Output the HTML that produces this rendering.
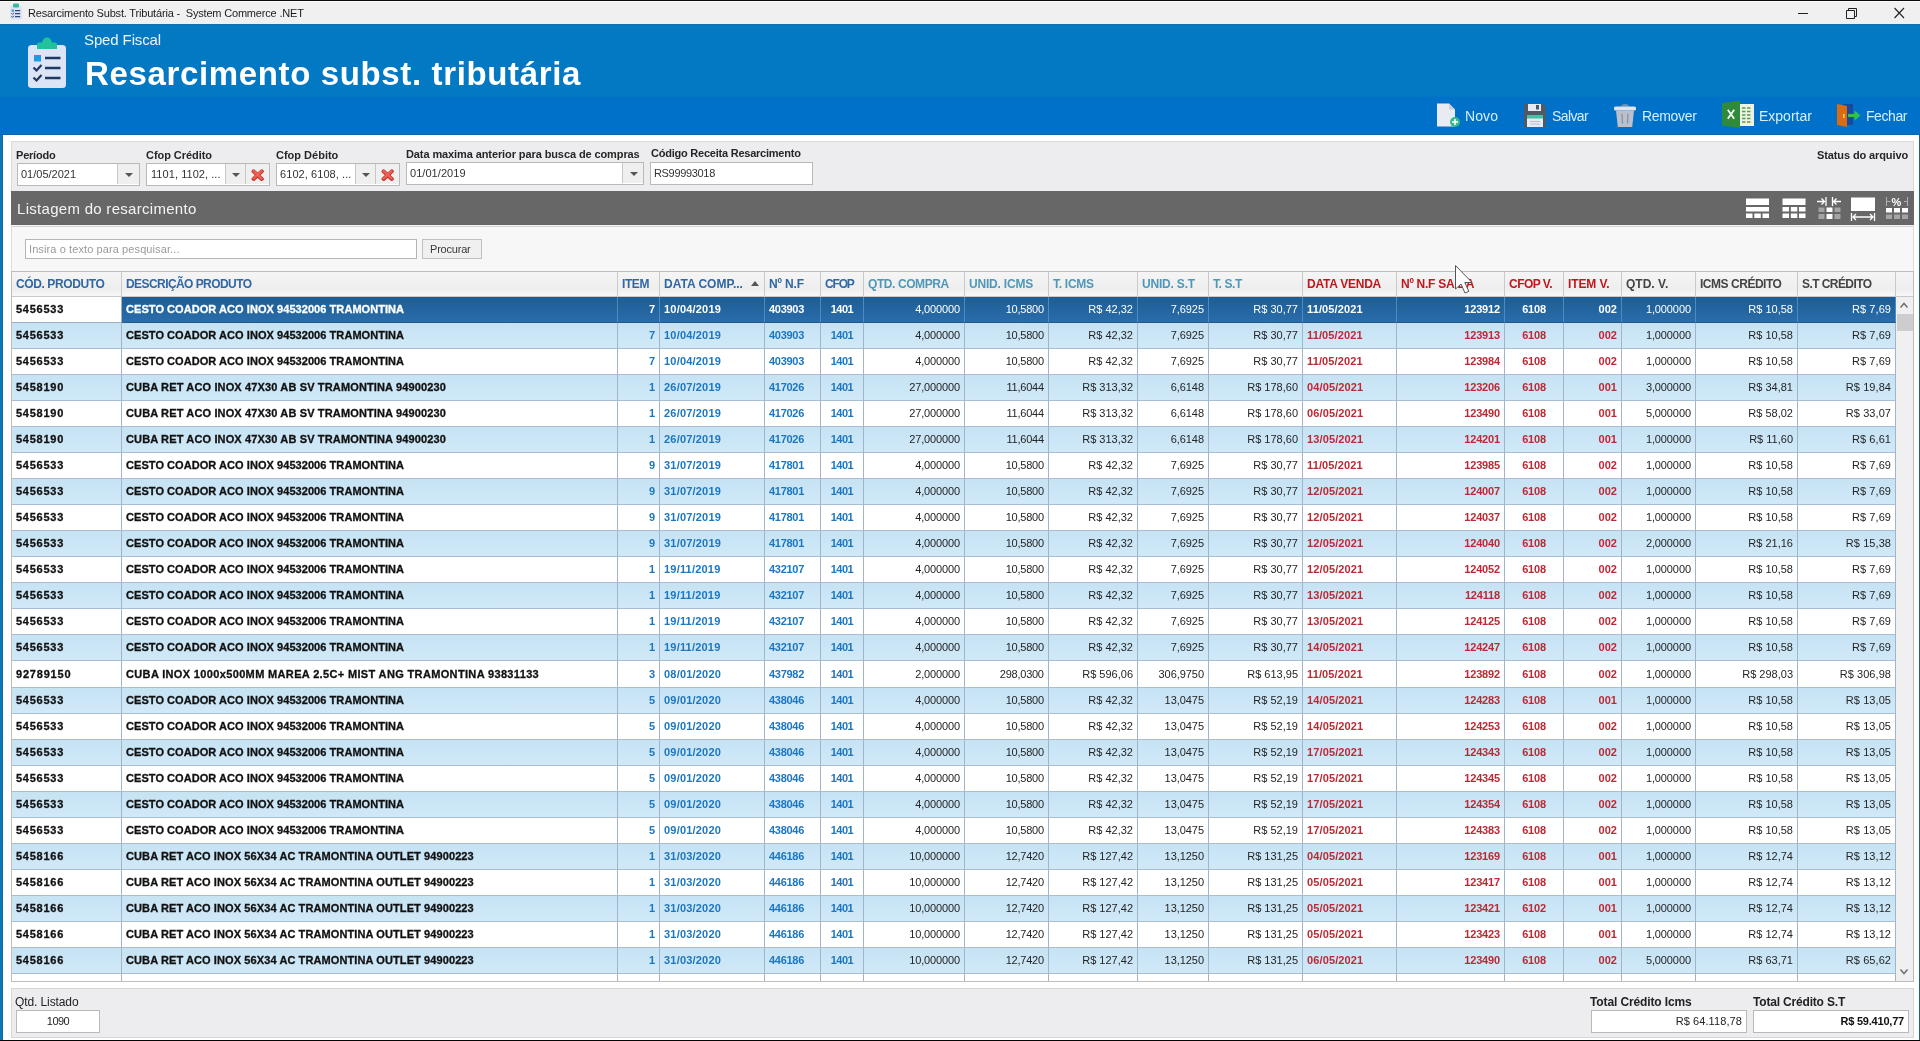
<!DOCTYPE html>
<html lang="pt-BR"><head><meta charset="utf-8"><title>Resarcimento Subst. Tributária - System Commerce .NET</title>
<style>
*{box-sizing:border-box;margin:0;padding:0}
html,body{width:1920px;height:1041px;overflow:hidden;background:#fff}
body{position:relative;-webkit-font-smoothing:antialiased;font-family:"Liberation Sans",sans-serif;font-size:11px;color:#1a1a1a}
.abs{position:absolute}
span{white-space:nowrap;display:inline-block}
#titletxt span{white-space:pre}
/* ---------- window chrome ---------- */
#topline{left:0;top:0;width:1920px;height:1px;background:#0b0b0b}
#titlebar{left:0;top:1px;width:1920px;height:23px;background:#f0f0f0;border-top:1px solid #fbfbfb;border-bottom:1px solid #e6f4fa}
#titletxt{left:28px;top:6px;white-space:pre;font-size:11px;line-height:14px;color:#1c1c1c}
#hdr1{left:0;top:24px;width:1920px;height:73px;background:linear-gradient(#0279c2 0,#0279c2 70px,#0175c5 73px);border-top:1px solid #1470a8}
#hdr2{left:0;top:97px;width:1920px;height:38px;background:#0071c8;border-bottom:1px solid #0a64b0}
#bleft{left:0;top:135px;width:3px;height:905px;background:linear-gradient(to right,#0b77b6 0,#0b77b6 2px,#1d6a96 2px)}
#bright{left:1919px;top:135px;width:1px;height:905px;background:#1f628c}
#bbot{left:0;top:1040px;width:1920px;height:1px;background:#050505}
#sped{left:84px;top:31px;font-size:15px;line-height:18px;color:#e9f4fc}
#bigtitle{left:85px;top:54px;font-size:33px;line-height:40px;font-weight:bold;color:#fff}
.tb{top:104px;height:24px;font-size:14px;line-height:24px;color:#d6eeff}
/* ---------- filter panel ---------- */
#fpanel{left:11px;top:141px;width:1903px;height:50px;background:#ededf0;border:1px solid #d9d9dc;border-bottom:none}
.lbl{font-size:11px;line-height:13px;font-weight:bold;color:#262626}
.inp{background:#fff;border:1px solid #b9b9b9;height:22px}
.inp .t{position:absolute;top:0;line-height:20px;font-size:11px;color:#333}
.h23{height:23px}.h23 .t{line-height:21px}.h23 .btn{height:21px}
.inp .btn{position:absolute;top:0;height:20px;background:#efefef;border-left:1px solid #c6c6c6}
.arr{position:absolute;width:0;height:0;border-left:4px solid transparent;border-right:4px solid transparent;border-top:4px solid #555}
/* ---------- dark caption ---------- */
#cap{left:11px;top:191px;width:1903px;height:34px;background:#676767}
#captxt{left:17px;top:200px;font-size:15px;line-height:18px;color:#f4f4f4}
/* ---------- search panel ---------- */
#spanel{left:11px;top:225px;width:1903px;height:47px;background:#f7f7f7;border:1px solid #dcdcdc;border-top:1px solid #f2f2f2;border-bottom:none;box-shadow:inset 0 1px 0 #d6d6d6}
#sinp{left:25px;top:239px;width:392px;height:20px;background:#fff;border:1px solid #b5b5b5}
#sinp span{position:absolute;left:3px;top:0;line-height:18px;color:#9a9a9a;font-size:11px}
#sbtn{left:422px;top:239px;width:60px;height:20px;background:#f0f0f0;border:1px solid #c0c0c0;text-align:left;padding-left:7px;line-height:18px;font-size:11px;color:#3a3a3a}
/* ---------- grid ---------- */
#grid{position:absolute;left:11px;top:271px;width:1903px;height:711px;border:1px solid #bdbdbd;background:#fff;overflow:hidden}
.hrow{position:absolute;left:0;top:0;width:1901px;height:25px;background:#f3f3f3}
.hc{position:absolute;top:0;height:25px;border-right:1px solid #c9c9c9;border-bottom:1px solid #c9c9c9;background:linear-gradient(#f5f5f5 0,#eeeeee 70%,#f7f7f7 100%);padding-left:4px;line-height:24px;font-size:12px;font-weight:bold;overflow:hidden}
.hb{color:#2f66a3}.ht{color:#4f97b9}.hr{color:#c2161c}.hk{color:#444}
.sort{position:absolute;right:5px;top:9px;width:0;height:0;border-left:4px solid transparent;border-right:4px solid transparent;border-bottom:5px solid #555}
.row{position:absolute;left:0;width:1884px;height:26px}
.c{position:absolute;top:0;height:26px;border-right:1px solid #a2b4ca;border-bottom:1px solid #a9bcd2;line-height:25px;font-size:11px;overflow:hidden;padding:0 4px}
.l{text-align:left}.r{text-align:right}.m{text-align:center}
.odd .c{background:linear-gradient(#c6e3f3,#d0e9f9)}
.even .c{background:#fff}
.sel .c{background:linear-gradient(#1d5d94,#2a6dab);border-right-color:#4b8bc4;border-bottom-color:#22588c;color:#fff}
.sel .c.foc{background:#fff;color:#111;border-right-color:#9fb0c6;border-bottom-color:#9fb0c6}
.kb{font-weight:bold;color:#111;-webkit-text-stroke:0.3px #111}
.bb{font-weight:bold;color:#1c76c0}
.rb{font-weight:bold;color:#bb2a34}
.nr{color:#242424}
.tall,.tall .c{height:27px}.tall .c{line-height:26px}
.sel .bb,.sel .rb,.sel .nr,.sel .kb{color:#fff}
.sel .kb{-webkit-text-stroke-color:#fff}
.sel .foc.kb{color:#111;-webkit-text-stroke-color:#111}
/* ---------- bottom panel ---------- */
#bpanel{left:11px;top:988px;width:1903px;height:50px;background:#ededf0;border:1px solid #d6d6d9}

#root{position:absolute;left:0;top:0;width:1920px;height:1041px;overflow:hidden;will-change:transform;transform:translateZ(0)}

.k0 span{letter-spacing:0.74px}.k1 span{letter-spacing:0.06px}.k2 span{letter-spacing:-0.12px;margin-right:0.12px}.k3 span{letter-spacing:0.20px}.k4 span{letter-spacing:-0.29px}.k5 span{letter-spacing:-0.50px}.k6 span{letter-spacing:-0.15px;margin-right:0.15px}.k7 span{letter-spacing:-0.25px;margin-right:0.25px}.k9 span{letter-spacing:-0.06px;margin-right:0.06px}.k11 span{letter-spacing:0.13px}.k12 span{letter-spacing:-0.20px;margin-right:0.20px}.k13 span{letter-spacing:-0.22px}.k14 span{letter-spacing:0.09px;margin-right:-0.09px}.k15 span{letter-spacing:-0.11px;margin-right:0.11px}.k17 span{letter-spacing:0.07px;margin-right:-0.07px}
</style></head><body><div id="root">
<div class="abs" id="titlebar"></div>
<div class="abs" id="topline"></div>
<svg class="abs" style="left:9px;top:3px" width="14" height="17" viewBox="0 0 14 17"><rect x="1" y="3" width="12" height="13.5" rx="1.5" fill="#dfe4f4"/><rect x="4" y="0.5" width="6" height="4" rx="1.2" fill="#2fbf9f"/><rect x="2.6" y="6.5" width="2.4" height="2.2" fill="#2f9fe0"/><path d="M6 7.6h5.2M6 10.6h5.2M6 13.6h5.2" stroke="#2d4a78" stroke-width="1.2"/><path d="M2.4 10.4l1 1 1.6-1.7M2.4 13.4l1 1 1.6-1.7" stroke="#2d4a78" stroke-width="1" fill="none"/></svg>
<div class="abs" id="titletxt"><span style="letter-spacing:-0.18px;">Resarcimento Subst. Tributária -  System Commerce .NET</span></div>
<svg class="abs" style="left:1790px;top:1px" width="130" height="23" viewBox="0 0 130 23"><path d="M8 12.5h10" stroke="#222" stroke-width="1"/><path d="M56.5 9.5h8v8h-8z M58.5 9.5v-2h8v8h-2" stroke="#222" stroke-width="1" fill="none"/><path d="M104.5 7l9.5 10M114 7l-9.5 10" stroke="#222" stroke-width="1.1"/></svg>
<div class="abs" id="hdr1"></div>
<div class="abs" id="hdr2"></div>
<div class="abs" id="bleft"></div>
<div class="abs" id="bright"></div>
<div class="abs" id="bbot"></div>
<!-- clipboard icon -->
<svg class="abs" style="left:27px;top:36px" width="40" height="53" viewBox="0 0 40 53"><rect x="1" y="9" width="38" height="43" rx="3.5" fill="#dde4f5"/><path d="M10 13V8.5q0-2 2-2h3q1.2-5 5-5t5 5h3q2 0 2 2V13z" fill="#20c19b"/><rect x="7" y="19" width="7" height="6.5" fill="#1f9be3"/><path d="M18 22h15.5M18 32h15.5M18 42h15.5" stroke="#1f3864" stroke-width="2.4"/><path d="M6.5 31.5l3 3 5-5.5M6.5 41.5l3 3 5-5.5" stroke="#1f3864" stroke-width="2.2" fill="none"/></svg>
<div class="abs" id="sped"><span style="letter-spacing:-0.12px;">Sped Fiscal</span></div>
<div class="abs" id="bigtitle"><span style="letter-spacing:0.64px;">Resarcimento subst. tributária</span></div>
<!-- toolbar -->
<svg class="abs" style="left:1436px;top:103px" width="26" height="25" viewBox="0 0 26 25"><path d="M1 0.5h12l6 6V23.5H1z" fill="#e9ebf3"/><path d="M13 0.5l6 6h-6z" fill="#c9cede"/><circle cx="19" cy="19" r="5" fill="#35b98b"/><path d="M19 16v6M16 19h6" stroke="#fff" stroke-width="1.6"/></svg>
<div class="abs tb" style="left:1465px"><span style="letter-spacing:0.11px;">Novo</span></div>
<svg class="abs" style="left:1523px;top:103px" width="24" height="25" viewBox="0 0 24 25"><path d="M1 1h19l3 3v20H1z" fill="#4e5a66"/><rect x="5" y="1" width="13" height="7" fill="#e8eaf2"/><rect x="13" y="2" width="3" height="4.5" fill="#4e5a66"/><rect x="4" y="12" width="16" height="12" fill="#e8ebf3"/><rect x="4" y="12" width="16" height="3.5" fill="#3cc6a2"/><path d="M7 18.5h10M7 21h10" stroke="#b9bfd0" stroke-width="1"/></svg>
<div class="abs tb" style="left:1552px"><span style="letter-spacing:-0.61px;">Salvar</span></div>
<svg class="abs" style="left:1613px;top:103px" width="24" height="25" viewBox="0 0 24 25"><path d="M8 3.500q0-2.500 4-2.500t4 2.500z" fill="#6d93b3"/><rect x="1" y="3.5" width="22" height="4" rx="1.5" fill="#e3e5ee"/><path d="M3 7.5h18l-1.8 16.5H4.8z" fill="#bcbfcc"/><path d="M9 10.5l.5 10M15 10.5l-.5 10" stroke="#8e93a3" stroke-width="1.3"/></svg>
<div class="abs tb" style="left:1642px"><span style="letter-spacing:-0.32px;">Remover</span></div>
<svg class="abs" style="left:1722px;top:100px" width="33" height="29" viewBox="0 0 33 29"><rect x="16" y="4" width="16" height="22" fill="#eef1e6"/><path d="M20 8h9M20 11.5h9M20 15h9M20 18.500h9M20 22h9" stroke="#5a9e47" stroke-width="1.6" stroke-dasharray="3.5 1.5"/><path d="M0 3L18 0.600v27.400L0 25.500z" fill="#2f8a3c"/><path d="M5.800 9.800l6.400 9M12.200 9.800l-6.400 9" stroke="#f2fff2" stroke-width="1.800"/></svg>
<div class="abs tb" style="left:1759px"><span>Exportar</span></div>
<svg class="abs" style="left:1836px;top:102px" width="26" height="26" viewBox="0 0 26 26"><rect x="7" y="2" width="10" height="21" fill="#174a9c"/><path d="M1 2l10 2v21L1 23z" fill="#d96c12"/><rect x="7" y="12" width="1.6" height="4" fill="#ffd24a"/><path d="M12 13.5h8" stroke="#31c053" stroke-width="3.2"/><path d="M18.5 8.500l6 5-6 5z" fill="#31c053"/></svg>
<div class="abs tb" style="left:1866px"><span style="letter-spacing:-0.43px;">Fechar</span></div>
<!-- filter panel -->
<div class="abs" id="fpanel"></div>
<div class="abs lbl" style="left:16px;top:149px"><span style="letter-spacing:-0.21px;">Período</span></div>
<div class="abs inp h23" style="left:17px;top:163px;width:123px"><span class="t" style="left:3px">01/05/2021</span><div class="btn" style="left:99px;width:22px"><i class="arr" style="left:7px;top:9px"></i></div></div>
<div class="abs lbl" style="left:146px;top:149px"><span style="letter-spacing:-0.05px;">Cfop Crédito</span></div>
<div class="abs inp h23" style="left:146px;top:163px;width:124px"><span class="t" style="letter-spacing:0.06px;left:4px">1101, 1102, ...</span><div class="btn" style="left:78px;width:20px"><i class="arr" style="left:6px;top:9px"></i></div><div class="btn" style="left:98px;width:24px"><svg style="position:absolute;left:5px;top:5px" width="14" height="13" viewBox="0 0 14 13"><path d="M2.600 2.400l8.200 7.600M10.800 2.400L2.600 10" stroke="#c9352c" stroke-width="4" stroke-linecap="round"/><path d="M2.600 2.200l8 7.300M10.600 2.200L2.600 9.500" stroke="#e96358" stroke-width="2.300" stroke-linecap="round"/></svg></div></div>
<div class="abs lbl" style="left:276px;top:149px"><span>Cfop Débito</span></div>
<div class="abs inp h23" style="left:276px;top:163px;width:124px"><span class="t" style="letter-spacing:0.07px;left:3px">6102, 6108, ...</span><div class="btn" style="left:78px;width:20px"><i class="arr" style="left:6px;top:9px"></i></div><div class="btn" style="left:98px;width:24px"><svg style="position:absolute;left:5px;top:5px" width="14" height="13" viewBox="0 0 14 13"><path d="M2.600 2.400l8.200 7.600M10.800 2.400L2.600 10" stroke="#c9352c" stroke-width="4" stroke-linecap="round"/><path d="M2.600 2.200l8 7.300M10.600 2.200L2.600 9.500" stroke="#e96358" stroke-width="2.300" stroke-linecap="round"/></svg></div></div>
<div class="abs lbl" style="left:406px;top:148px"><span style="letter-spacing:-0.10px;">Data maxima anterior para busca de compras</span></div>
<div class="abs inp h23" style="left:406px;top:162px;width:238px"><span class="t" style="letter-spacing:0.05px;left:3px">01/01/2019</span><div class="btn" style="left:215px;width:21px"><i class="arr" style="left:7px;top:9px"></i></div></div>
<div class="abs lbl" style="left:651px;top:147px"><span style="letter-spacing:-0.23px;">Código Receita Resarcimento</span></div>
<div class="abs inp h23" style="left:650px;top:162px;width:163px"><span class="t" style="letter-spacing:-0.33px;left:3px">RS99993018</span></div>
<div class="abs lbl" style="left:1817px;top:149px"><span style="letter-spacing:-0.11px;">Status do arquivo</span></div>
<!-- caption -->
<div class="abs" id="cap"></div>
<div class="abs" id="captxt"><span style="letter-spacing:0.29px;">Listagem do resarcimento</span></div>
<svg class="abs" style="left:1744px;top:195px" width="168" height="28" viewBox="0 0 168 28">
<g fill="#fff"><rect x="2" y="3.500" width="23" height="6.500"/><rect x="2" y="12" width="23" height="4.500"/><rect x="2" y="18.500" width="6.500" height="4.500"/><rect x="10.300" y="18.500" width="6.500" height="4.500"/><rect x="18.500" y="18.500" width="6.500" height="4.500"/>
<rect x="38.500" y="3.500" width="23" height="6.500"/><rect x="38.500" y="12" width="6.500" height="4.500"/><rect x="46.800" y="12" width="6.500" height="4.500"/><rect x="55" y="12" width="6.500" height="4.500"/><rect x="38.500" y="18.500" width="6.500" height="4.500"/><rect x="46.800" y="18.500" width="6.500" height="4.500"/><rect x="55" y="18.500" width="6.500" height="4.500"/>
<rect x="82.500" y="12.500" width="6" height="4.500"/><rect x="82.500" y="19" width="6" height="5"/>
<rect x="107" y="2.500" width="24" height="13.500"/>
<rect x="142" y="13" width="6" height="4.500"/><rect x="150" y="13" width="6" height="4.500"/><rect x="158" y="13" width="6" height="4.500"/></g>
<g fill="#a4a4a4"><rect x="74.500" y="12.500" width="6" height="4.500"/><rect x="90.500" y="12.500" width="6" height="4.500"/><rect x="74.500" y="19" width="6" height="5"/><rect x="90.500" y="19" width="6" height="5"/><rect x="142" y="19.500" width="6" height="4.500"/><rect x="150" y="19.500" width="6" height="4.500"/><rect x="158" y="19.500" width="6" height="4.500"/></g>
<g stroke="#fff" stroke-width="1.3" fill="none"><path d="M73 6.500h7M77.500 3.500l3 3-3 3M82 2v9M88.500 2v9M97 6.500h-7M92.500 3.500l-3 3 3 3"/><path d="M107.500 18v8M130.500 18v8M109 22h20M112 19l-3 3 3 3M126 19l3 3-3 3"/></g>
<g stroke="#b0b0b0" stroke-width="1" fill="none"><path d="M142.500 2v9M163.500 2v9M143 6.500h3.500M160 6.500h3.500"/></g>
<text x="147.500" y="11" font-family="Liberation Sans, sans-serif" font-size="11" font-weight="bold" fill="#fff">%</text>
</svg>
<!-- search panel -->
<div class="abs" id="spanel"></div>
<div class="abs" id="sinp"><span style="letter-spacing:0.10px;">Insira o texto para pesquisar...</span></div>
<div class="abs" id="sbtn"><span style="letter-spacing:-0.20px;">Procurar</span></div>

<div id="grid">
<div class="hrow">
<div class="hc hb" style="left:0px;width:110px"><span style="letter-spacing:-0.40px;">CÓD. PRODUTO</span></div>
<div class="hc hb" style="left:110px;width:496px"><span style="letter-spacing:-0.57px;">DESCRIÇÃO PRODUTO</span></div>
<div class="hc hb" style="left:606px;width:42px"><span style="letter-spacing:-0.41px;">ITEM</span></div>
<div class="hc hb" style="left:648px;width:105px"><span>DATA COMP...</span><i class="sort"></i></div>
<div class="hc hb" style="left:753px;width:56px"><span style="letter-spacing:-0.12px;">Nº N.F</span></div>
<div class="hc hb" style="left:809px;width:43px"><span style="letter-spacing:-1.18px;">CFOP</span></div>
<div class="hc ht" style="left:852px;width:101px"><span style="letter-spacing:-0.42px;">QTD. COMPRA</span></div>
<div class="hc ht" style="left:953px;width:84px"><span style="letter-spacing:-0.20px;">UNID. ICMS</span></div>
<div class="hc ht" style="left:1037px;width:89px"><span style="letter-spacing:-0.28px;">T. ICMS</span></div>
<div class="hc ht" style="left:1126px;width:71px"><span style="letter-spacing:-0.19px;">UNID. S.T</span></div>
<div class="hc ht" style="left:1197px;width:94px"><span style="letter-spacing:-0.39px;">T. S.T</span></div>
<div class="hc hr" style="left:1291px;width:94px"><span style="letter-spacing:-0.24px;">DATA VENDA</span></div>
<div class="hc hr" style="left:1385px;width:108px"><span style="letter-spacing:-0.26px;">Nº N.F SAÍDA</span></div>
<div class="hc hr" style="left:1493px;width:59px"><span style="letter-spacing:-0.52px;">CFOP V.</span></div>
<div class="hc hr" style="left:1552px;width:58px"><span style="letter-spacing:-0.12px;">ITEM V.</span></div>
<div class="hc hk" style="left:1610px;width:74px"><span>QTD. V.</span></div>
<div class="hc hk" style="left:1684px;width:102px"><span style="letter-spacing:-0.47px;">ICMS CRÉDITO</span></div>
<div class="hc hk" style="left:1786px;width:98px"><span style="letter-spacing:-0.57px;">S.T CRÉDITO</span></div>
<div class="hc" style="left:1884px;width:18px;border-right:none"></div>
</div>
<div class="row sel" style="top:25px">
<div class="c kb l k0 foc" style="left:0px;width:110px"><span>5456533</span></div>
<div class="c kb l k1" style="left:110px;width:496px"><span>CESTO COADOR ACO INOX 94532006 TRAMONTINA</span></div>
<div class="c bb r k2" style="left:606px;width:42px"><span>7</span></div>
<div class="c bb l k3" style="left:648px;width:105px"><span>10/04/2019</span></div>
<div class="c bb l k4" style="left:753px;width:56px"><span>403903</span></div>
<div class="c bb m k5" style="left:809px;width:43px"><span>1401</span></div>
<div class="c nr r k6" style="left:852px;width:101px"><span>4,000000</span></div>
<div class="c nr r k7" style="left:953px;width:84px"><span>10,5800</span></div>
<div class="c nr r k8" style="left:1037px;width:89px"><span>R$ 42,32</span></div>
<div class="c nr r k9" style="left:1126px;width:71px"><span>7,6925</span></div>
<div class="c nr r k10" style="left:1197px;width:94px"><span>R$ 30,77</span></div>
<div class="c rb l k11" style="left:1291px;width:94px"><span>11/05/2021</span></div>
<div class="c rb r k12" style="left:1385px;width:108px"><span>123912</span></div>
<div class="c rb m k13" style="left:1493px;width:59px"><span>6108</span></div>
<div class="c rb r k14" style="left:1552px;width:58px"><span>002</span></div>
<div class="c nr r k15" style="left:1610px;width:74px"><span>1,000000</span></div>
<div class="c nr r k16" style="left:1684px;width:102px"><span>R$ 10,58</span></div>
<div class="c nr r k17" style="left:1786px;width:98px"><span>R$ 7,69</span></div>
</div>
<div class="row odd" style="top:51px">
<div class="c kb l k0" style="left:0px;width:110px"><span>5456533</span></div>
<div class="c kb l k1" style="left:110px;width:496px"><span>CESTO COADOR ACO INOX 94532006 TRAMONTINA</span></div>
<div class="c bb r k2" style="left:606px;width:42px"><span>7</span></div>
<div class="c bb l k3" style="left:648px;width:105px"><span>10/04/2019</span></div>
<div class="c bb l k4" style="left:753px;width:56px"><span>403903</span></div>
<div class="c bb m k5" style="left:809px;width:43px"><span>1401</span></div>
<div class="c nr r k6" style="left:852px;width:101px"><span>4,000000</span></div>
<div class="c nr r k7" style="left:953px;width:84px"><span>10,5800</span></div>
<div class="c nr r k8" style="left:1037px;width:89px"><span>R$ 42,32</span></div>
<div class="c nr r k9" style="left:1126px;width:71px"><span>7,6925</span></div>
<div class="c nr r k10" style="left:1197px;width:94px"><span>R$ 30,77</span></div>
<div class="c rb l k11" style="left:1291px;width:94px"><span>11/05/2021</span></div>
<div class="c rb r k12" style="left:1385px;width:108px"><span>123913</span></div>
<div class="c rb m k13" style="left:1493px;width:59px"><span>6108</span></div>
<div class="c rb r k14" style="left:1552px;width:58px"><span>002</span></div>
<div class="c nr r k15" style="left:1610px;width:74px"><span>1,000000</span></div>
<div class="c nr r k16" style="left:1684px;width:102px"><span>R$ 10,58</span></div>
<div class="c nr r k17" style="left:1786px;width:98px"><span>R$ 7,69</span></div>
</div>
<div class="row even" style="top:77px">
<div class="c kb l k0" style="left:0px;width:110px"><span>5456533</span></div>
<div class="c kb l k1" style="left:110px;width:496px"><span>CESTO COADOR ACO INOX 94532006 TRAMONTINA</span></div>
<div class="c bb r k2" style="left:606px;width:42px"><span>7</span></div>
<div class="c bb l k3" style="left:648px;width:105px"><span>10/04/2019</span></div>
<div class="c bb l k4" style="left:753px;width:56px"><span>403903</span></div>
<div class="c bb m k5" style="left:809px;width:43px"><span>1401</span></div>
<div class="c nr r k6" style="left:852px;width:101px"><span>4,000000</span></div>
<div class="c nr r k7" style="left:953px;width:84px"><span>10,5800</span></div>
<div class="c nr r k8" style="left:1037px;width:89px"><span>R$ 42,32</span></div>
<div class="c nr r k9" style="left:1126px;width:71px"><span>7,6925</span></div>
<div class="c nr r k10" style="left:1197px;width:94px"><span>R$ 30,77</span></div>
<div class="c rb l k11" style="left:1291px;width:94px"><span>11/05/2021</span></div>
<div class="c rb r k12" style="left:1385px;width:108px"><span>123984</span></div>
<div class="c rb m k13" style="left:1493px;width:59px"><span>6108</span></div>
<div class="c rb r k14" style="left:1552px;width:58px"><span>002</span></div>
<div class="c nr r k15" style="left:1610px;width:74px"><span>1,000000</span></div>
<div class="c nr r k16" style="left:1684px;width:102px"><span>R$ 10,58</span></div>
<div class="c nr r k17" style="left:1786px;width:98px"><span>R$ 7,69</span></div>
</div>
<div class="row odd" style="top:103px">
<div class="c kb l k0" style="left:0px;width:110px"><span>5458190</span></div>
<div class="c kb l k1" style="left:110px;width:496px"><span style="letter-spacing:0.14px">CUBA RET ACO INOX 47X30 AB SV TRAMONTINA 94900230</span></div>
<div class="c bb r k2" style="left:606px;width:42px"><span>1</span></div>
<div class="c bb l k3" style="left:648px;width:105px"><span>26/07/2019</span></div>
<div class="c bb l k4" style="left:753px;width:56px"><span>417026</span></div>
<div class="c bb m k5" style="left:809px;width:43px"><span>1401</span></div>
<div class="c nr r k6" style="left:852px;width:101px"><span>27,000000</span></div>
<div class="c nr r k7" style="left:953px;width:84px"><span>11,6044</span></div>
<div class="c nr r k8" style="left:1037px;width:89px"><span>R$ 313,32</span></div>
<div class="c nr r k9" style="left:1126px;width:71px"><span>6,6148</span></div>
<div class="c nr r k10" style="left:1197px;width:94px"><span>R$ 178,60</span></div>
<div class="c rb l k11" style="left:1291px;width:94px"><span>04/05/2021</span></div>
<div class="c rb r k12" style="left:1385px;width:108px"><span>123206</span></div>
<div class="c rb m k13" style="left:1493px;width:59px"><span>6108</span></div>
<div class="c rb r k14" style="left:1552px;width:58px"><span>001</span></div>
<div class="c nr r k15" style="left:1610px;width:74px"><span>3,000000</span></div>
<div class="c nr r k16" style="left:1684px;width:102px"><span>R$ 34,81</span></div>
<div class="c nr r k17" style="left:1786px;width:98px"><span>R$ 19,84</span></div>
</div>
<div class="row even" style="top:129px">
<div class="c kb l k0" style="left:0px;width:110px"><span>5458190</span></div>
<div class="c kb l k1" style="left:110px;width:496px"><span style="letter-spacing:0.14px">CUBA RET ACO INOX 47X30 AB SV TRAMONTINA 94900230</span></div>
<div class="c bb r k2" style="left:606px;width:42px"><span>1</span></div>
<div class="c bb l k3" style="left:648px;width:105px"><span>26/07/2019</span></div>
<div class="c bb l k4" style="left:753px;width:56px"><span>417026</span></div>
<div class="c bb m k5" style="left:809px;width:43px"><span>1401</span></div>
<div class="c nr r k6" style="left:852px;width:101px"><span>27,000000</span></div>
<div class="c nr r k7" style="left:953px;width:84px"><span>11,6044</span></div>
<div class="c nr r k8" style="left:1037px;width:89px"><span>R$ 313,32</span></div>
<div class="c nr r k9" style="left:1126px;width:71px"><span>6,6148</span></div>
<div class="c nr r k10" style="left:1197px;width:94px"><span>R$ 178,60</span></div>
<div class="c rb l k11" style="left:1291px;width:94px"><span>06/05/2021</span></div>
<div class="c rb r k12" style="left:1385px;width:108px"><span>123490</span></div>
<div class="c rb m k13" style="left:1493px;width:59px"><span>6108</span></div>
<div class="c rb r k14" style="left:1552px;width:58px"><span>001</span></div>
<div class="c nr r k15" style="left:1610px;width:74px"><span>5,000000</span></div>
<div class="c nr r k16" style="left:1684px;width:102px"><span>R$ 58,02</span></div>
<div class="c nr r k17" style="left:1786px;width:98px"><span>R$ 33,07</span></div>
</div>
<div class="row odd" style="top:155px">
<div class="c kb l k0" style="left:0px;width:110px"><span>5458190</span></div>
<div class="c kb l k1" style="left:110px;width:496px"><span style="letter-spacing:0.14px">CUBA RET ACO INOX 47X30 AB SV TRAMONTINA 94900230</span></div>
<div class="c bb r k2" style="left:606px;width:42px"><span>1</span></div>
<div class="c bb l k3" style="left:648px;width:105px"><span>26/07/2019</span></div>
<div class="c bb l k4" style="left:753px;width:56px"><span>417026</span></div>
<div class="c bb m k5" style="left:809px;width:43px"><span>1401</span></div>
<div class="c nr r k6" style="left:852px;width:101px"><span>27,000000</span></div>
<div class="c nr r k7" style="left:953px;width:84px"><span>11,6044</span></div>
<div class="c nr r k8" style="left:1037px;width:89px"><span>R$ 313,32</span></div>
<div class="c nr r k9" style="left:1126px;width:71px"><span>6,6148</span></div>
<div class="c nr r k10" style="left:1197px;width:94px"><span>R$ 178,60</span></div>
<div class="c rb l k11" style="left:1291px;width:94px"><span>13/05/2021</span></div>
<div class="c rb r k12" style="left:1385px;width:108px"><span>124201</span></div>
<div class="c rb m k13" style="left:1493px;width:59px"><span>6108</span></div>
<div class="c rb r k14" style="left:1552px;width:58px"><span>001</span></div>
<div class="c nr r k15" style="left:1610px;width:74px"><span>1,000000</span></div>
<div class="c nr r k16" style="left:1684px;width:102px"><span>R$ 11,60</span></div>
<div class="c nr r k17" style="left:1786px;width:98px"><span>R$ 6,61</span></div>
</div>
<div class="row even" style="top:181px">
<div class="c kb l k0" style="left:0px;width:110px"><span>5456533</span></div>
<div class="c kb l k1" style="left:110px;width:496px"><span>CESTO COADOR ACO INOX 94532006 TRAMONTINA</span></div>
<div class="c bb r k2" style="left:606px;width:42px"><span>9</span></div>
<div class="c bb l k3" style="left:648px;width:105px"><span>31/07/2019</span></div>
<div class="c bb l k4" style="left:753px;width:56px"><span>417801</span></div>
<div class="c bb m k5" style="left:809px;width:43px"><span>1401</span></div>
<div class="c nr r k6" style="left:852px;width:101px"><span>4,000000</span></div>
<div class="c nr r k7" style="left:953px;width:84px"><span>10,5800</span></div>
<div class="c nr r k8" style="left:1037px;width:89px"><span>R$ 42,32</span></div>
<div class="c nr r k9" style="left:1126px;width:71px"><span>7,6925</span></div>
<div class="c nr r k10" style="left:1197px;width:94px"><span>R$ 30,77</span></div>
<div class="c rb l k11" style="left:1291px;width:94px"><span>11/05/2021</span></div>
<div class="c rb r k12" style="left:1385px;width:108px"><span>123985</span></div>
<div class="c rb m k13" style="left:1493px;width:59px"><span>6108</span></div>
<div class="c rb r k14" style="left:1552px;width:58px"><span>002</span></div>
<div class="c nr r k15" style="left:1610px;width:74px"><span>1,000000</span></div>
<div class="c nr r k16" style="left:1684px;width:102px"><span>R$ 10,58</span></div>
<div class="c nr r k17" style="left:1786px;width:98px"><span>R$ 7,69</span></div>
</div>
<div class="row odd" style="top:207px">
<div class="c kb l k0" style="left:0px;width:110px"><span>5456533</span></div>
<div class="c kb l k1" style="left:110px;width:496px"><span>CESTO COADOR ACO INOX 94532006 TRAMONTINA</span></div>
<div class="c bb r k2" style="left:606px;width:42px"><span>9</span></div>
<div class="c bb l k3" style="left:648px;width:105px"><span>31/07/2019</span></div>
<div class="c bb l k4" style="left:753px;width:56px"><span>417801</span></div>
<div class="c bb m k5" style="left:809px;width:43px"><span>1401</span></div>
<div class="c nr r k6" style="left:852px;width:101px"><span>4,000000</span></div>
<div class="c nr r k7" style="left:953px;width:84px"><span>10,5800</span></div>
<div class="c nr r k8" style="left:1037px;width:89px"><span>R$ 42,32</span></div>
<div class="c nr r k9" style="left:1126px;width:71px"><span>7,6925</span></div>
<div class="c nr r k10" style="left:1197px;width:94px"><span>R$ 30,77</span></div>
<div class="c rb l k11" style="left:1291px;width:94px"><span>12/05/2021</span></div>
<div class="c rb r k12" style="left:1385px;width:108px"><span>124007</span></div>
<div class="c rb m k13" style="left:1493px;width:59px"><span>6108</span></div>
<div class="c rb r k14" style="left:1552px;width:58px"><span>002</span></div>
<div class="c nr r k15" style="left:1610px;width:74px"><span>1,000000</span></div>
<div class="c nr r k16" style="left:1684px;width:102px"><span>R$ 10,58</span></div>
<div class="c nr r k17" style="left:1786px;width:98px"><span>R$ 7,69</span></div>
</div>
<div class="row even" style="top:233px">
<div class="c kb l k0" style="left:0px;width:110px"><span>5456533</span></div>
<div class="c kb l k1" style="left:110px;width:496px"><span>CESTO COADOR ACO INOX 94532006 TRAMONTINA</span></div>
<div class="c bb r k2" style="left:606px;width:42px"><span>9</span></div>
<div class="c bb l k3" style="left:648px;width:105px"><span>31/07/2019</span></div>
<div class="c bb l k4" style="left:753px;width:56px"><span>417801</span></div>
<div class="c bb m k5" style="left:809px;width:43px"><span>1401</span></div>
<div class="c nr r k6" style="left:852px;width:101px"><span>4,000000</span></div>
<div class="c nr r k7" style="left:953px;width:84px"><span>10,5800</span></div>
<div class="c nr r k8" style="left:1037px;width:89px"><span>R$ 42,32</span></div>
<div class="c nr r k9" style="left:1126px;width:71px"><span>7,6925</span></div>
<div class="c nr r k10" style="left:1197px;width:94px"><span>R$ 30,77</span></div>
<div class="c rb l k11" style="left:1291px;width:94px"><span>12/05/2021</span></div>
<div class="c rb r k12" style="left:1385px;width:108px"><span>124037</span></div>
<div class="c rb m k13" style="left:1493px;width:59px"><span>6108</span></div>
<div class="c rb r k14" style="left:1552px;width:58px"><span>002</span></div>
<div class="c nr r k15" style="left:1610px;width:74px"><span>1,000000</span></div>
<div class="c nr r k16" style="left:1684px;width:102px"><span>R$ 10,58</span></div>
<div class="c nr r k17" style="left:1786px;width:98px"><span>R$ 7,69</span></div>
</div>
<div class="row odd" style="top:259px">
<div class="c kb l k0" style="left:0px;width:110px"><span>5456533</span></div>
<div class="c kb l k1" style="left:110px;width:496px"><span>CESTO COADOR ACO INOX 94532006 TRAMONTINA</span></div>
<div class="c bb r k2" style="left:606px;width:42px"><span>9</span></div>
<div class="c bb l k3" style="left:648px;width:105px"><span>31/07/2019</span></div>
<div class="c bb l k4" style="left:753px;width:56px"><span>417801</span></div>
<div class="c bb m k5" style="left:809px;width:43px"><span>1401</span></div>
<div class="c nr r k6" style="left:852px;width:101px"><span>4,000000</span></div>
<div class="c nr r k7" style="left:953px;width:84px"><span>10,5800</span></div>
<div class="c nr r k8" style="left:1037px;width:89px"><span>R$ 42,32</span></div>
<div class="c nr r k9" style="left:1126px;width:71px"><span>7,6925</span></div>
<div class="c nr r k10" style="left:1197px;width:94px"><span>R$ 30,77</span></div>
<div class="c rb l k11" style="left:1291px;width:94px"><span>12/05/2021</span></div>
<div class="c rb r k12" style="left:1385px;width:108px"><span>124040</span></div>
<div class="c rb m k13" style="left:1493px;width:59px"><span>6108</span></div>
<div class="c rb r k14" style="left:1552px;width:58px"><span>002</span></div>
<div class="c nr r k15" style="left:1610px;width:74px"><span>2,000000</span></div>
<div class="c nr r k16" style="left:1684px;width:102px"><span>R$ 21,16</span></div>
<div class="c nr r k17" style="left:1786px;width:98px"><span>R$ 15,38</span></div>
</div>
<div class="row even" style="top:285px">
<div class="c kb l k0" style="left:0px;width:110px"><span>5456533</span></div>
<div class="c kb l k1" style="left:110px;width:496px"><span>CESTO COADOR ACO INOX 94532006 TRAMONTINA</span></div>
<div class="c bb r k2" style="left:606px;width:42px"><span>1</span></div>
<div class="c bb l k3" style="left:648px;width:105px"><span>19/11/2019</span></div>
<div class="c bb l k4" style="left:753px;width:56px"><span>432107</span></div>
<div class="c bb m k5" style="left:809px;width:43px"><span>1401</span></div>
<div class="c nr r k6" style="left:852px;width:101px"><span>4,000000</span></div>
<div class="c nr r k7" style="left:953px;width:84px"><span>10,5800</span></div>
<div class="c nr r k8" style="left:1037px;width:89px"><span>R$ 42,32</span></div>
<div class="c nr r k9" style="left:1126px;width:71px"><span>7,6925</span></div>
<div class="c nr r k10" style="left:1197px;width:94px"><span>R$ 30,77</span></div>
<div class="c rb l k11" style="left:1291px;width:94px"><span>12/05/2021</span></div>
<div class="c rb r k12" style="left:1385px;width:108px"><span>124052</span></div>
<div class="c rb m k13" style="left:1493px;width:59px"><span>6108</span></div>
<div class="c rb r k14" style="left:1552px;width:58px"><span>002</span></div>
<div class="c nr r k15" style="left:1610px;width:74px"><span>1,000000</span></div>
<div class="c nr r k16" style="left:1684px;width:102px"><span>R$ 10,58</span></div>
<div class="c nr r k17" style="left:1786px;width:98px"><span>R$ 7,69</span></div>
</div>
<div class="row odd" style="top:311px">
<div class="c kb l k0" style="left:0px;width:110px"><span>5456533</span></div>
<div class="c kb l k1" style="left:110px;width:496px"><span>CESTO COADOR ACO INOX 94532006 TRAMONTINA</span></div>
<div class="c bb r k2" style="left:606px;width:42px"><span>1</span></div>
<div class="c bb l k3" style="left:648px;width:105px"><span>19/11/2019</span></div>
<div class="c bb l k4" style="left:753px;width:56px"><span>432107</span></div>
<div class="c bb m k5" style="left:809px;width:43px"><span>1401</span></div>
<div class="c nr r k6" style="left:852px;width:101px"><span>4,000000</span></div>
<div class="c nr r k7" style="left:953px;width:84px"><span>10,5800</span></div>
<div class="c nr r k8" style="left:1037px;width:89px"><span>R$ 42,32</span></div>
<div class="c nr r k9" style="left:1126px;width:71px"><span>7,6925</span></div>
<div class="c nr r k10" style="left:1197px;width:94px"><span>R$ 30,77</span></div>
<div class="c rb l k11" style="left:1291px;width:94px"><span>13/05/2021</span></div>
<div class="c rb r k12" style="left:1385px;width:108px"><span>124118</span></div>
<div class="c rb m k13" style="left:1493px;width:59px"><span>6108</span></div>
<div class="c rb r k14" style="left:1552px;width:58px"><span>002</span></div>
<div class="c nr r k15" style="left:1610px;width:74px"><span>1,000000</span></div>
<div class="c nr r k16" style="left:1684px;width:102px"><span>R$ 10,58</span></div>
<div class="c nr r k17" style="left:1786px;width:98px"><span>R$ 7,69</span></div>
</div>
<div class="row even" style="top:337px">
<div class="c kb l k0" style="left:0px;width:110px"><span>5456533</span></div>
<div class="c kb l k1" style="left:110px;width:496px"><span>CESTO COADOR ACO INOX 94532006 TRAMONTINA</span></div>
<div class="c bb r k2" style="left:606px;width:42px"><span>1</span></div>
<div class="c bb l k3" style="left:648px;width:105px"><span>19/11/2019</span></div>
<div class="c bb l k4" style="left:753px;width:56px"><span>432107</span></div>
<div class="c bb m k5" style="left:809px;width:43px"><span>1401</span></div>
<div class="c nr r k6" style="left:852px;width:101px"><span>4,000000</span></div>
<div class="c nr r k7" style="left:953px;width:84px"><span>10,5800</span></div>
<div class="c nr r k8" style="left:1037px;width:89px"><span>R$ 42,32</span></div>
<div class="c nr r k9" style="left:1126px;width:71px"><span>7,6925</span></div>
<div class="c nr r k10" style="left:1197px;width:94px"><span>R$ 30,77</span></div>
<div class="c rb l k11" style="left:1291px;width:94px"><span>13/05/2021</span></div>
<div class="c rb r k12" style="left:1385px;width:108px"><span>124125</span></div>
<div class="c rb m k13" style="left:1493px;width:59px"><span>6108</span></div>
<div class="c rb r k14" style="left:1552px;width:58px"><span>002</span></div>
<div class="c nr r k15" style="left:1610px;width:74px"><span>1,000000</span></div>
<div class="c nr r k16" style="left:1684px;width:102px"><span>R$ 10,58</span></div>
<div class="c nr r k17" style="left:1786px;width:98px"><span>R$ 7,69</span></div>
</div>
<div class="row odd" style="top:363px">
<div class="c kb l k0" style="left:0px;width:110px"><span>5456533</span></div>
<div class="c kb l k1" style="left:110px;width:496px"><span>CESTO COADOR ACO INOX 94532006 TRAMONTINA</span></div>
<div class="c bb r k2" style="left:606px;width:42px"><span>1</span></div>
<div class="c bb l k3" style="left:648px;width:105px"><span>19/11/2019</span></div>
<div class="c bb l k4" style="left:753px;width:56px"><span>432107</span></div>
<div class="c bb m k5" style="left:809px;width:43px"><span>1401</span></div>
<div class="c nr r k6" style="left:852px;width:101px"><span>4,000000</span></div>
<div class="c nr r k7" style="left:953px;width:84px"><span>10,5800</span></div>
<div class="c nr r k8" style="left:1037px;width:89px"><span>R$ 42,32</span></div>
<div class="c nr r k9" style="left:1126px;width:71px"><span>7,6925</span></div>
<div class="c nr r k10" style="left:1197px;width:94px"><span>R$ 30,77</span></div>
<div class="c rb l k11" style="left:1291px;width:94px"><span>14/05/2021</span></div>
<div class="c rb r k12" style="left:1385px;width:108px"><span>124247</span></div>
<div class="c rb m k13" style="left:1493px;width:59px"><span>6108</span></div>
<div class="c rb r k14" style="left:1552px;width:58px"><span>002</span></div>
<div class="c nr r k15" style="left:1610px;width:74px"><span>1,000000</span></div>
<div class="c nr r k16" style="left:1684px;width:102px"><span>R$ 10,58</span></div>
<div class="c nr r k17" style="left:1786px;width:98px"><span>R$ 7,69</span></div>
</div>
<div class="row even tall" style="top:389px">
<div class="c kb l k0" style="left:0px;width:110px"><span style="letter-spacing:0.80px">92789150</span></div>
<div class="c kb l k1" style="left:110px;width:496px"><span style="letter-spacing:0.35px">CUBA INOX 1000x500MM MAREA 2.5C+ MIST ANG TRAMONTINA 93831133</span></div>
<div class="c bb r k2" style="left:606px;width:42px"><span>3</span></div>
<div class="c bb l k3" style="left:648px;width:105px"><span>08/01/2020</span></div>
<div class="c bb l k4" style="left:753px;width:56px"><span>437982</span></div>
<div class="c bb m k5" style="left:809px;width:43px"><span>1401</span></div>
<div class="c nr r k6" style="left:852px;width:101px"><span>2,000000</span></div>
<div class="c nr r k7" style="left:953px;width:84px"><span>298,0300</span></div>
<div class="c nr r k8" style="left:1037px;width:89px"><span>R$ 596,06</span></div>
<div class="c nr r k9" style="left:1126px;width:71px"><span>306,9750</span></div>
<div class="c nr r k10" style="left:1197px;width:94px"><span>R$ 613,95</span></div>
<div class="c rb l k11" style="left:1291px;width:94px"><span>11/05/2021</span></div>
<div class="c rb r k12" style="left:1385px;width:108px"><span>123892</span></div>
<div class="c rb m k13" style="left:1493px;width:59px"><span>6108</span></div>
<div class="c rb r k14" style="left:1552px;width:58px"><span>002</span></div>
<div class="c nr r k15" style="left:1610px;width:74px"><span>1,000000</span></div>
<div class="c nr r k16" style="left:1684px;width:102px"><span>R$ 298,03</span></div>
<div class="c nr r k17" style="left:1786px;width:98px"><span>R$ 306,98</span></div>
</div>
<div class="row odd" style="top:416px">
<div class="c kb l k0" style="left:0px;width:110px"><span>5456533</span></div>
<div class="c kb l k1" style="left:110px;width:496px"><span>CESTO COADOR ACO INOX 94532006 TRAMONTINA</span></div>
<div class="c bb r k2" style="left:606px;width:42px"><span>5</span></div>
<div class="c bb l k3" style="left:648px;width:105px"><span>09/01/2020</span></div>
<div class="c bb l k4" style="left:753px;width:56px"><span>438046</span></div>
<div class="c bb m k5" style="left:809px;width:43px"><span>1401</span></div>
<div class="c nr r k6" style="left:852px;width:101px"><span>4,000000</span></div>
<div class="c nr r k7" style="left:953px;width:84px"><span>10,5800</span></div>
<div class="c nr r k8" style="left:1037px;width:89px"><span>R$ 42,32</span></div>
<div class="c nr r k9" style="left:1126px;width:71px"><span>13,0475</span></div>
<div class="c nr r k10" style="left:1197px;width:94px"><span>R$ 52,19</span></div>
<div class="c rb l k11" style="left:1291px;width:94px"><span>14/05/2021</span></div>
<div class="c rb r k12" style="left:1385px;width:108px"><span>124283</span></div>
<div class="c rb m k13" style="left:1493px;width:59px"><span>6108</span></div>
<div class="c rb r k14" style="left:1552px;width:58px"><span>001</span></div>
<div class="c nr r k15" style="left:1610px;width:74px"><span>1,000000</span></div>
<div class="c nr r k16" style="left:1684px;width:102px"><span>R$ 10,58</span></div>
<div class="c nr r k17" style="left:1786px;width:98px"><span>R$ 13,05</span></div>
</div>
<div class="row even" style="top:442px">
<div class="c kb l k0" style="left:0px;width:110px"><span>5456533</span></div>
<div class="c kb l k1" style="left:110px;width:496px"><span>CESTO COADOR ACO INOX 94532006 TRAMONTINA</span></div>
<div class="c bb r k2" style="left:606px;width:42px"><span>5</span></div>
<div class="c bb l k3" style="left:648px;width:105px"><span>09/01/2020</span></div>
<div class="c bb l k4" style="left:753px;width:56px"><span>438046</span></div>
<div class="c bb m k5" style="left:809px;width:43px"><span>1401</span></div>
<div class="c nr r k6" style="left:852px;width:101px"><span>4,000000</span></div>
<div class="c nr r k7" style="left:953px;width:84px"><span>10,5800</span></div>
<div class="c nr r k8" style="left:1037px;width:89px"><span>R$ 42,32</span></div>
<div class="c nr r k9" style="left:1126px;width:71px"><span>13,0475</span></div>
<div class="c nr r k10" style="left:1197px;width:94px"><span>R$ 52,19</span></div>
<div class="c rb l k11" style="left:1291px;width:94px"><span>14/05/2021</span></div>
<div class="c rb r k12" style="left:1385px;width:108px"><span>124253</span></div>
<div class="c rb m k13" style="left:1493px;width:59px"><span>6108</span></div>
<div class="c rb r k14" style="left:1552px;width:58px"><span>002</span></div>
<div class="c nr r k15" style="left:1610px;width:74px"><span>1,000000</span></div>
<div class="c nr r k16" style="left:1684px;width:102px"><span>R$ 10,58</span></div>
<div class="c nr r k17" style="left:1786px;width:98px"><span>R$ 13,05</span></div>
</div>
<div class="row odd" style="top:468px">
<div class="c kb l k0" style="left:0px;width:110px"><span>5456533</span></div>
<div class="c kb l k1" style="left:110px;width:496px"><span>CESTO COADOR ACO INOX 94532006 TRAMONTINA</span></div>
<div class="c bb r k2" style="left:606px;width:42px"><span>5</span></div>
<div class="c bb l k3" style="left:648px;width:105px"><span>09/01/2020</span></div>
<div class="c bb l k4" style="left:753px;width:56px"><span>438046</span></div>
<div class="c bb m k5" style="left:809px;width:43px"><span>1401</span></div>
<div class="c nr r k6" style="left:852px;width:101px"><span>4,000000</span></div>
<div class="c nr r k7" style="left:953px;width:84px"><span>10,5800</span></div>
<div class="c nr r k8" style="left:1037px;width:89px"><span>R$ 42,32</span></div>
<div class="c nr r k9" style="left:1126px;width:71px"><span>13,0475</span></div>
<div class="c nr r k10" style="left:1197px;width:94px"><span>R$ 52,19</span></div>
<div class="c rb l k11" style="left:1291px;width:94px"><span>17/05/2021</span></div>
<div class="c rb r k12" style="left:1385px;width:108px"><span>124343</span></div>
<div class="c rb m k13" style="left:1493px;width:59px"><span>6108</span></div>
<div class="c rb r k14" style="left:1552px;width:58px"><span>002</span></div>
<div class="c nr r k15" style="left:1610px;width:74px"><span>1,000000</span></div>
<div class="c nr r k16" style="left:1684px;width:102px"><span>R$ 10,58</span></div>
<div class="c nr r k17" style="left:1786px;width:98px"><span>R$ 13,05</span></div>
</div>
<div class="row even" style="top:494px">
<div class="c kb l k0" style="left:0px;width:110px"><span>5456533</span></div>
<div class="c kb l k1" style="left:110px;width:496px"><span>CESTO COADOR ACO INOX 94532006 TRAMONTINA</span></div>
<div class="c bb r k2" style="left:606px;width:42px"><span>5</span></div>
<div class="c bb l k3" style="left:648px;width:105px"><span>09/01/2020</span></div>
<div class="c bb l k4" style="left:753px;width:56px"><span>438046</span></div>
<div class="c bb m k5" style="left:809px;width:43px"><span>1401</span></div>
<div class="c nr r k6" style="left:852px;width:101px"><span>4,000000</span></div>
<div class="c nr r k7" style="left:953px;width:84px"><span>10,5800</span></div>
<div class="c nr r k8" style="left:1037px;width:89px"><span>R$ 42,32</span></div>
<div class="c nr r k9" style="left:1126px;width:71px"><span>13,0475</span></div>
<div class="c nr r k10" style="left:1197px;width:94px"><span>R$ 52,19</span></div>
<div class="c rb l k11" style="left:1291px;width:94px"><span>17/05/2021</span></div>
<div class="c rb r k12" style="left:1385px;width:108px"><span>124345</span></div>
<div class="c rb m k13" style="left:1493px;width:59px"><span>6108</span></div>
<div class="c rb r k14" style="left:1552px;width:58px"><span>002</span></div>
<div class="c nr r k15" style="left:1610px;width:74px"><span>1,000000</span></div>
<div class="c nr r k16" style="left:1684px;width:102px"><span>R$ 10,58</span></div>
<div class="c nr r k17" style="left:1786px;width:98px"><span>R$ 13,05</span></div>
</div>
<div class="row odd" style="top:520px">
<div class="c kb l k0" style="left:0px;width:110px"><span>5456533</span></div>
<div class="c kb l k1" style="left:110px;width:496px"><span>CESTO COADOR ACO INOX 94532006 TRAMONTINA</span></div>
<div class="c bb r k2" style="left:606px;width:42px"><span>5</span></div>
<div class="c bb l k3" style="left:648px;width:105px"><span>09/01/2020</span></div>
<div class="c bb l k4" style="left:753px;width:56px"><span>438046</span></div>
<div class="c bb m k5" style="left:809px;width:43px"><span>1401</span></div>
<div class="c nr r k6" style="left:852px;width:101px"><span>4,000000</span></div>
<div class="c nr r k7" style="left:953px;width:84px"><span>10,5800</span></div>
<div class="c nr r k8" style="left:1037px;width:89px"><span>R$ 42,32</span></div>
<div class="c nr r k9" style="left:1126px;width:71px"><span>13,0475</span></div>
<div class="c nr r k10" style="left:1197px;width:94px"><span>R$ 52,19</span></div>
<div class="c rb l k11" style="left:1291px;width:94px"><span>17/05/2021</span></div>
<div class="c rb r k12" style="left:1385px;width:108px"><span>124354</span></div>
<div class="c rb m k13" style="left:1493px;width:59px"><span>6108</span></div>
<div class="c rb r k14" style="left:1552px;width:58px"><span>002</span></div>
<div class="c nr r k15" style="left:1610px;width:74px"><span>1,000000</span></div>
<div class="c nr r k16" style="left:1684px;width:102px"><span>R$ 10,58</span></div>
<div class="c nr r k17" style="left:1786px;width:98px"><span>R$ 13,05</span></div>
</div>
<div class="row even" style="top:546px">
<div class="c kb l k0" style="left:0px;width:110px"><span>5456533</span></div>
<div class="c kb l k1" style="left:110px;width:496px"><span>CESTO COADOR ACO INOX 94532006 TRAMONTINA</span></div>
<div class="c bb r k2" style="left:606px;width:42px"><span>5</span></div>
<div class="c bb l k3" style="left:648px;width:105px"><span>09/01/2020</span></div>
<div class="c bb l k4" style="left:753px;width:56px"><span>438046</span></div>
<div class="c bb m k5" style="left:809px;width:43px"><span>1401</span></div>
<div class="c nr r k6" style="left:852px;width:101px"><span>4,000000</span></div>
<div class="c nr r k7" style="left:953px;width:84px"><span>10,5800</span></div>
<div class="c nr r k8" style="left:1037px;width:89px"><span>R$ 42,32</span></div>
<div class="c nr r k9" style="left:1126px;width:71px"><span>13,0475</span></div>
<div class="c nr r k10" style="left:1197px;width:94px"><span>R$ 52,19</span></div>
<div class="c rb l k11" style="left:1291px;width:94px"><span>17/05/2021</span></div>
<div class="c rb r k12" style="left:1385px;width:108px"><span>124383</span></div>
<div class="c rb m k13" style="left:1493px;width:59px"><span>6108</span></div>
<div class="c rb r k14" style="left:1552px;width:58px"><span>002</span></div>
<div class="c nr r k15" style="left:1610px;width:74px"><span>1,000000</span></div>
<div class="c nr r k16" style="left:1684px;width:102px"><span>R$ 10,58</span></div>
<div class="c nr r k17" style="left:1786px;width:98px"><span>R$ 13,05</span></div>
</div>
<div class="row odd" style="top:572px">
<div class="c kb l k0" style="left:0px;width:110px"><span>5458166</span></div>
<div class="c kb l k1" style="left:110px;width:496px"><span style="letter-spacing:0.10px">CUBA RET ACO INOX 56X34 AC TRAMONTINA OUTLET 94900223</span></div>
<div class="c bb r k2" style="left:606px;width:42px"><span>1</span></div>
<div class="c bb l k3" style="left:648px;width:105px"><span>31/03/2020</span></div>
<div class="c bb l k4" style="left:753px;width:56px"><span>446186</span></div>
<div class="c bb m k5" style="left:809px;width:43px"><span>1401</span></div>
<div class="c nr r k6" style="left:852px;width:101px"><span>10,000000</span></div>
<div class="c nr r k7" style="left:953px;width:84px"><span>12,7420</span></div>
<div class="c nr r k8" style="left:1037px;width:89px"><span>R$ 127,42</span></div>
<div class="c nr r k9" style="left:1126px;width:71px"><span>13,1250</span></div>
<div class="c nr r k10" style="left:1197px;width:94px"><span>R$ 131,25</span></div>
<div class="c rb l k11" style="left:1291px;width:94px"><span>04/05/2021</span></div>
<div class="c rb r k12" style="left:1385px;width:108px"><span>123169</span></div>
<div class="c rb m k13" style="left:1493px;width:59px"><span>6108</span></div>
<div class="c rb r k14" style="left:1552px;width:58px"><span>001</span></div>
<div class="c nr r k15" style="left:1610px;width:74px"><span>1,000000</span></div>
<div class="c nr r k16" style="left:1684px;width:102px"><span>R$ 12,74</span></div>
<div class="c nr r k17" style="left:1786px;width:98px"><span>R$ 13,12</span></div>
</div>
<div class="row even" style="top:598px">
<div class="c kb l k0" style="left:0px;width:110px"><span>5458166</span></div>
<div class="c kb l k1" style="left:110px;width:496px"><span style="letter-spacing:0.10px">CUBA RET ACO INOX 56X34 AC TRAMONTINA OUTLET 94900223</span></div>
<div class="c bb r k2" style="left:606px;width:42px"><span>1</span></div>
<div class="c bb l k3" style="left:648px;width:105px"><span>31/03/2020</span></div>
<div class="c bb l k4" style="left:753px;width:56px"><span>446186</span></div>
<div class="c bb m k5" style="left:809px;width:43px"><span>1401</span></div>
<div class="c nr r k6" style="left:852px;width:101px"><span>10,000000</span></div>
<div class="c nr r k7" style="left:953px;width:84px"><span>12,7420</span></div>
<div class="c nr r k8" style="left:1037px;width:89px"><span>R$ 127,42</span></div>
<div class="c nr r k9" style="left:1126px;width:71px"><span>13,1250</span></div>
<div class="c nr r k10" style="left:1197px;width:94px"><span>R$ 131,25</span></div>
<div class="c rb l k11" style="left:1291px;width:94px"><span>05/05/2021</span></div>
<div class="c rb r k12" style="left:1385px;width:108px"><span>123417</span></div>
<div class="c rb m k13" style="left:1493px;width:59px"><span>6108</span></div>
<div class="c rb r k14" style="left:1552px;width:58px"><span>001</span></div>
<div class="c nr r k15" style="left:1610px;width:74px"><span>1,000000</span></div>
<div class="c nr r k16" style="left:1684px;width:102px"><span>R$ 12,74</span></div>
<div class="c nr r k17" style="left:1786px;width:98px"><span>R$ 13,12</span></div>
</div>
<div class="row odd" style="top:624px">
<div class="c kb l k0" style="left:0px;width:110px"><span>5458166</span></div>
<div class="c kb l k1" style="left:110px;width:496px"><span style="letter-spacing:0.10px">CUBA RET ACO INOX 56X34 AC TRAMONTINA OUTLET 94900223</span></div>
<div class="c bb r k2" style="left:606px;width:42px"><span>1</span></div>
<div class="c bb l k3" style="left:648px;width:105px"><span>31/03/2020</span></div>
<div class="c bb l k4" style="left:753px;width:56px"><span>446186</span></div>
<div class="c bb m k5" style="left:809px;width:43px"><span>1401</span></div>
<div class="c nr r k6" style="left:852px;width:101px"><span>10,000000</span></div>
<div class="c nr r k7" style="left:953px;width:84px"><span>12,7420</span></div>
<div class="c nr r k8" style="left:1037px;width:89px"><span>R$ 127,42</span></div>
<div class="c nr r k9" style="left:1126px;width:71px"><span>13,1250</span></div>
<div class="c nr r k10" style="left:1197px;width:94px"><span>R$ 131,25</span></div>
<div class="c rb l k11" style="left:1291px;width:94px"><span>05/05/2021</span></div>
<div class="c rb r k12" style="left:1385px;width:108px"><span>123421</span></div>
<div class="c rb m k13" style="left:1493px;width:59px"><span>6102</span></div>
<div class="c rb r k14" style="left:1552px;width:58px"><span>001</span></div>
<div class="c nr r k15" style="left:1610px;width:74px"><span>1,000000</span></div>
<div class="c nr r k16" style="left:1684px;width:102px"><span>R$ 12,74</span></div>
<div class="c nr r k17" style="left:1786px;width:98px"><span>R$ 13,12</span></div>
</div>
<div class="row even" style="top:650px">
<div class="c kb l k0" style="left:0px;width:110px"><span>5458166</span></div>
<div class="c kb l k1" style="left:110px;width:496px"><span style="letter-spacing:0.10px">CUBA RET ACO INOX 56X34 AC TRAMONTINA OUTLET 94900223</span></div>
<div class="c bb r k2" style="left:606px;width:42px"><span>1</span></div>
<div class="c bb l k3" style="left:648px;width:105px"><span>31/03/2020</span></div>
<div class="c bb l k4" style="left:753px;width:56px"><span>446186</span></div>
<div class="c bb m k5" style="left:809px;width:43px"><span>1401</span></div>
<div class="c nr r k6" style="left:852px;width:101px"><span>10,000000</span></div>
<div class="c nr r k7" style="left:953px;width:84px"><span>12,7420</span></div>
<div class="c nr r k8" style="left:1037px;width:89px"><span>R$ 127,42</span></div>
<div class="c nr r k9" style="left:1126px;width:71px"><span>13,1250</span></div>
<div class="c nr r k10" style="left:1197px;width:94px"><span>R$ 131,25</span></div>
<div class="c rb l k11" style="left:1291px;width:94px"><span>05/05/2021</span></div>
<div class="c rb r k12" style="left:1385px;width:108px"><span>123423</span></div>
<div class="c rb m k13" style="left:1493px;width:59px"><span>6108</span></div>
<div class="c rb r k14" style="left:1552px;width:58px"><span>001</span></div>
<div class="c nr r k15" style="left:1610px;width:74px"><span>1,000000</span></div>
<div class="c nr r k16" style="left:1684px;width:102px"><span>R$ 12,74</span></div>
<div class="c nr r k17" style="left:1786px;width:98px"><span>R$ 13,12</span></div>
</div>
<div class="row odd" style="top:676px">
<div class="c kb l k0" style="left:0px;width:110px"><span>5458166</span></div>
<div class="c kb l k1" style="left:110px;width:496px"><span style="letter-spacing:0.10px">CUBA RET ACO INOX 56X34 AC TRAMONTINA OUTLET 94900223</span></div>
<div class="c bb r k2" style="left:606px;width:42px"><span>1</span></div>
<div class="c bb l k3" style="left:648px;width:105px"><span>31/03/2020</span></div>
<div class="c bb l k4" style="left:753px;width:56px"><span>446186</span></div>
<div class="c bb m k5" style="left:809px;width:43px"><span>1401</span></div>
<div class="c nr r k6" style="left:852px;width:101px"><span>10,000000</span></div>
<div class="c nr r k7" style="left:953px;width:84px"><span>12,7420</span></div>
<div class="c nr r k8" style="left:1037px;width:89px"><span>R$ 127,42</span></div>
<div class="c nr r k9" style="left:1126px;width:71px"><span>13,1250</span></div>
<div class="c nr r k10" style="left:1197px;width:94px"><span>R$ 131,25</span></div>
<div class="c rb l k11" style="left:1291px;width:94px"><span>06/05/2021</span></div>
<div class="c rb r k12" style="left:1385px;width:108px"><span>123490</span></div>
<div class="c rb m k13" style="left:1493px;width:59px"><span>6108</span></div>
<div class="c rb r k14" style="left:1552px;width:58px"><span>002</span></div>
<div class="c nr r k15" style="left:1610px;width:74px"><span>5,000000</span></div>
<div class="c nr r k16" style="left:1684px;width:102px"><span>R$ 63,71</span></div>
<div class="c nr r k17" style="left:1786px;width:98px"><span>R$ 65,62</span></div>
</div>
<div class="row even" style="top:702px">
<div class="c kb l k0" style="left:0px;width:110px"><span></span></div>
<div class="c kb l k1" style="left:110px;width:496px"><span></span></div>
<div class="c bb r k2" style="left:606px;width:42px"><span></span></div>
<div class="c bb l k3" style="left:648px;width:105px"><span></span></div>
<div class="c bb l k4" style="left:753px;width:56px"><span></span></div>
<div class="c bb m k5" style="left:809px;width:43px"><span></span></div>
<div class="c nr r k6" style="left:852px;width:101px"><span></span></div>
<div class="c nr r k7" style="left:953px;width:84px"><span></span></div>
<div class="c nr r k8" style="left:1037px;width:89px"><span></span></div>
<div class="c nr r k9" style="left:1126px;width:71px"><span></span></div>
<div class="c nr r k10" style="left:1197px;width:94px"><span></span></div>
<div class="c rb l k11" style="left:1291px;width:94px"><span></span></div>
<div class="c rb r k12" style="left:1385px;width:108px"><span></span></div>
<div class="c rb m k13" style="left:1493px;width:59px"><span></span></div>
<div class="c rb r k14" style="left:1552px;width:58px"><span></span></div>
<div class="c nr r k15" style="left:1610px;width:74px"><span></span></div>
<div class="c nr r k16" style="left:1684px;width:102px"><span></span></div>
<div class="c nr r k17" style="left:1786px;width:98px"><span></span></div>
</div>
<div style="position:absolute;left:1884px;top:25px;width:17px;height:685px;background:#f0f0f0"></div>
<svg style="position:absolute;left:1886px;top:28px" width="12" height="10" viewBox="0 0 12 10"><path d="M2.500 7.500l3.500-4 3.500 4" stroke="#707070" stroke-width="1.500" fill="none"/></svg>
<div style="position:absolute;left:1885px;top:42px;width:16px;height:17px;background:#cdcdcd"></div>
<svg style="position:absolute;left:1886px;top:695px" width="12" height="10" viewBox="0 0 12 10"><path d="M2.500 2.500l3.500 4 3.500-4" stroke="#707070" stroke-width="1.500" fill="none"/></svg>

</div>
<div class="abs" id="bpanel"></div>
<div class="abs" style="left:15px;top:995px;font-size:12px;line-height:14px;color:#222"><span style="letter-spacing:-0.10px;">Qtd. Listado</span></div>
<div class="abs inp" style="left:16px;top:1010px;width:84px;height:23px;text-align:center;line-height:21px;font-size:11px;color:#222"><span style="letter-spacing:-0.52px;">1090</span></div>
<div class="abs" style="left:1590px;top:995px;font-size:12px;line-height:14px;font-weight:bold;color:#222"><span style="letter-spacing:-0.12px;">Total Crédito Icms</span></div>
<div class="abs inp" style="left:1591px;top:1010px;width:156px;height:23px;text-align:right;line-height:21px;font-size:11px;color:#222;padding-right:4px"><span style="letter-spacing:0.09px;">R$ 64.118,78</span></div>
<div class="abs" style="left:1753px;top:995px;font-size:12px;line-height:14px;font-weight:bold;color:#222"><span style="letter-spacing:-0.18px;">Total Crédito S.T</span></div>
<div class="abs inp" style="left:1753px;top:1010px;width:156px;height:23px;text-align:right;line-height:21px;font-size:11px;font-weight:bold;color:#111;padding-right:4px"><span style="letter-spacing:-0.21px;">R$ 59.410,77</span></div>
<!-- mouse cursor -->
<svg class="abs" style="left:1453px;top:263px" width="22" height="32" viewBox="0 0 22 32"><path d="M2.500 2.500V26l5.500-5 4 9 3.800-1.700-4-8.800H19z" fill="#fff" stroke="#555" stroke-width="1" stroke-linejoin="round"/></svg>

</div></body></html>
